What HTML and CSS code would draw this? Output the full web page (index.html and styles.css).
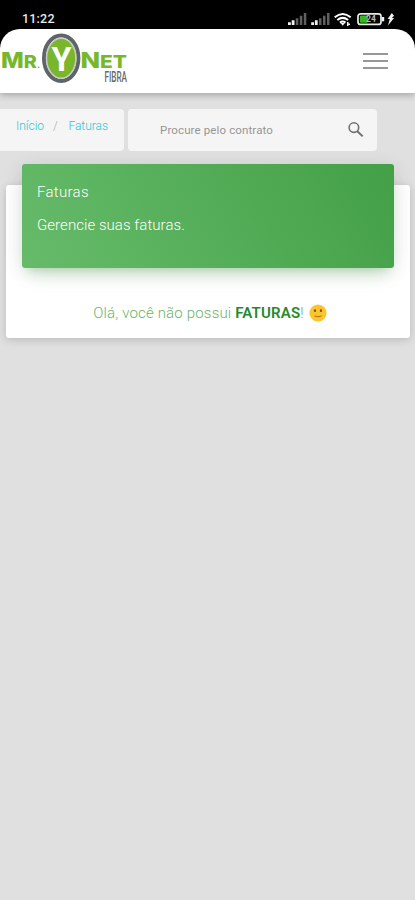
FILE: index.html
```html
<!DOCTYPE html>
<html lang="pt-BR">
<head>
<meta charset="utf-8">
<title>Faturas</title>
<link rel="stylesheet" href="styles.css">
</head>
<body>
<div class="status">
  <span class="clock">11:22</span>
  <svg class="indicators" width="110" height="16" viewBox="0 0 110 16">
    <g id="signal">
      <path class="on" d="M0 13h2.8v-2.7H0zM3.7 13h2.8V8.2H3.7z"/>
      <path class="dim" d="M7.8 13h2.5V6.2H7.8zM11.8 13h2.5V3.8h-2.5zM15.8 13h2.5V1h-2.5z"/>
    </g>
    <use href="#signal" x="23.2"/>
    <g fill="none" stroke="#fff" stroke-width="2">
      <path d="M46.7 5.2q8-6.5 16 0M49.3 8q5.4-4.2 10.8 0M51.9 10.6q2.8-2 5.6 0"/>
    </g>
    <path class="on" d="M52.5 11l2.2 2.7 2.2-2.7zM59 10h1.5v1.5H62V13h-1.5v.9H59zM103.8 1l-4.2 6h2.2l-1.8 6.4 6-7.4h-2.2l2.2-2.2z"/>
    <rect x="70" y="1.8" width="23" height="10.6" rx="2.5" fill="none" stroke="#e8eee5" stroke-width="1.7"/>
    <rect x="71.9" y="3.4" width="8" height="7.4" rx="1" fill="#38b820"/>
    <path class="on" d="M93.7 5h2.5v4.3h-2.5z"/>
    <text x="78" y="10.4" class="level">24</text>
  </svg>
</div>
<header class="top">
  <svg class="logo" width="134" height="64" viewBox="0 0 134 64">
    <g class="brand">
      <text x="1" y="39.4" textLength="39" lengthAdjust="spacingAndGlyphs">M<tspan class="small">R</tspan><tspan class="dot">.</tspan></text>
      <text x="80.5" y="39.4" textLength="46.5" lengthAdjust="spacingAndGlyphs">N<tspan class="small">ET</tspan></text>
    </g>
    <ellipse cx="61.2" cy="29.2" rx="17.2" ry="22.8" fill="none" stroke="#5f6468" stroke-width="4"/>
    <ellipse cx="61.2" cy="29.2" rx="14.7" ry="20" fill="#79b62b" stroke="#c5cbc9" stroke-width="1.5"/>
    <text x="51.4" y="42.3" class="mark" textLength="20" lengthAdjust="spacingAndGlyphs">Y</text>
    <text x="104.5" y="53" class="fibra" textLength="22.5" lengthAdjust="spacingAndGlyphs">FIBRA</text>
  </svg>
  <div class="burger"><i></i><i></i><i></i></div>
</header>
<main>
  <div class="tools">
    <nav class="crumbs"><a>Início</a><span>/</span><a>Faturas</a></nav>
    <div class="search">
      <span>Procure pelo contrato</span>
      <svg width="16" height="16" viewBox="0 0 16 16" fill="none" stroke="#707070"><circle cx="5.9" cy="5.6" r="4.8" stroke-width="1.6"/><path d="M9.3 9.2l5.4 5.2" stroke-width="2"/></svg>
    </div>
  </div>
  <section class="card">
    <div class="banner">
      <h1>Faturas</h1>
      <p>Gerencie suas faturas.</p>
    </div>
    <p class="empty"><span>Olá, você não possui <b>FATURAS</b>!</span>
      <svg width="18" height="18" viewBox="0 0 18 18"><circle cx="9" cy="9" r="8.6" fill="#fcc52c"/><ellipse cx="6" cy="6.7" rx="1.1" ry="1.4" fill="#70501d"/><ellipse cx="12" cy="6.7" rx="1.1" ry="1.4" fill="#70501d"/><path d="M5.8 12q3.2 1.2 6.4 0" fill="none" stroke="#a87820" stroke-width="1.1" stroke-linecap="round"/></svg>
    </p>
  </section>
</main>
</body>
</html>
```

FILE: styles.css
```css
* { box-sizing: border-box; }
body {
  margin: 0;
  height: 900px;
  overflow: hidden;
  background: #e0e0e0;
  font-family: Roboto, "Liberation Sans", sans-serif;
  font-weight: 300;
}
.status {
  height: 50px;
  margin-bottom: -21px;
  padding: 11px 17px 0 22px;
  background: #000;
  display: flex;
  justify-content: space-between;
  align-items: flex-start;
}
.clock { color: #e8e8e8; font-size: 12.5px; line-height: 16px; font-weight: 500; letter-spacing: .2px; }
.indicators { margin-top: 1px; }
.on { fill: #f2f2f2; }
.dim { fill: #606060; }
.level { fill: #bbb; font-size: 8.5px; font-weight: 700; }
.top {
  position: relative;
  height: 64px;
  background: #fff;
  border-radius: 20px 20px 0 0;
  box-shadow: 0 2px 7px rgba(0, 0, 0, .28);
  display: flex;
  justify-content: space-between;
  padding-right: 27px;
}
.brand { fill: #76b82a; font: 800 22px Inter, sans-serif; }
.small { font-size: 18px; }
.dot { font-size: 8px; }
.mark { fill: #fff; font: 700 33px Roboto, sans-serif; }
.fibra { fill: #65696b; font: 500 14.5px Roboto, sans-serif; }
.burger { width: 25px; padding-top: 24px; display: flex; flex-direction: column; gap: 4.5px; }
.burger i { height: 2.3px; background: #979797; }
.tools { display: flex; gap: 4px; padding-top: 16px; }
.crumbs, .search { height: 42px; background: #f5f5f5; border-radius: 4px; display: flex; }
.crumbs { width: 124px; padding: 9px 0 0 16px; border-radius: 0 4px 4px 0; font-size: 12px; line-height: 16px; color: #2cc4d8; }
.crumbs span { color: #aaa; margin: 0 10.5px 0 9px; }
.search { width: 249px; padding: 0 13px 0 32px; align-items: center; justify-content: space-between; font-size: 11.5px; letter-spacing: .13px; color: #959595; font-weight: 400; }
.card {
  margin: 34px 5px 0 6px;
  height: 153px;
  padding: 0 16px;
  background: #fff;
  border-radius: 3px;
  box-shadow: 0 2px 9px rgba(0, 0, 0, .17);
  display: flow-root;
}
.banner {
  height: 104px;
  margin-top: -21px;
  padding: 18px 15px 17px;
  border-radius: 3px;
  background: linear-gradient(60deg, #66bb6a, #43a047);
  box-shadow: 0 12px 20px -10px rgba(76, 175, 80, .28), 0 4px 20px rgba(0, 0, 0, .12), 0 7px 8px -5px rgba(76, 175, 80, .2);
  color: #fff;
}
.banner h1, .banner p { margin: 0; font-size: 15px; line-height: 20px; font-weight: 300; letter-spacing: .05px; }
.banner h1 { letter-spacing: .3px; }
.banner p { margin-top: 13px; }
.empty { display: flex; justify-content: center; align-items: center; gap: 5px; margin: 35px 0 0; padding-left: 4px; font-size: 15px; line-height: 20px; letter-spacing: .18px; color: #69b36d; white-space: nowrap; }
.empty b { font-weight: 600; color: #258a2a; }
```
